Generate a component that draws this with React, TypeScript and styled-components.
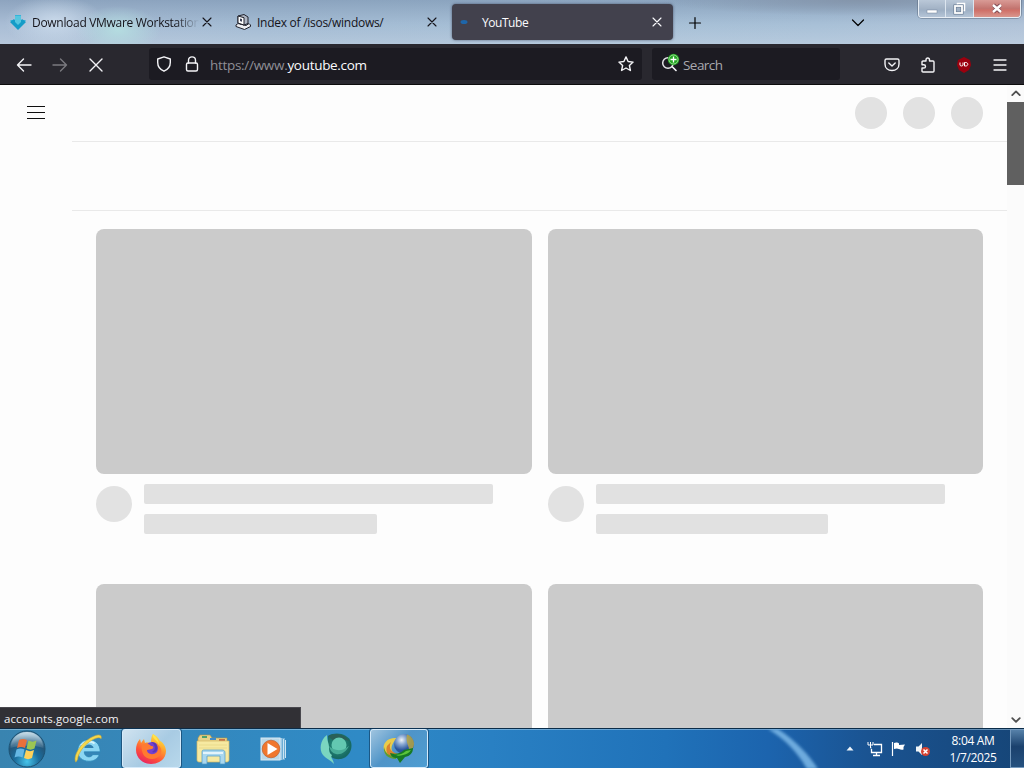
import type { ReactNode } from "react";
import styled, { createGlobalStyle } from "styled-components";

const GlobalStyle = createGlobalStyle`
  * {
    box-sizing: border-box;
  }
  body {
    margin: 0;
    overflow: hidden;
    font-family: "Open Sans", "Noto Sans", sans-serif;
    font-size: 12px;
  }
  svg {
    display: block;
    flex-shrink: 0;
  }
`;

const Wrapper = styled.div`
  display: flex;
  flex-direction: column;
  width: 1024px;
  height: 768px;
  overflow: hidden;
  background-color: #fdfdfd;
`;

const TabBar = styled.div`
  position: relative;
  display: flex;
  height: 44px;
  padding: 4px 0 4px 2px;
  gap: 4px;
  background:
    radial-gradient(ellipse 42px 24px at 118px 30px, #b4dce0 0%, transparent 100%),
    radial-gradient(ellipse 50px 26px at 55px 22px, #c9d9ea 0%, transparent 100%),
    radial-gradient(ellipse 200px 16px at 860px 0px, #8495ab 0%, transparent 100%),
    linear-gradient(to bottom, rgba(114, 139, 169, 0.5), transparent 55%, rgba(208, 220, 233, 0.35)),
    linear-gradient(to right, #a9bdd5, #a3bbd3 25%, #a6bfd6 60%, #a8c0d7 80%, #b1c3d8);
`;

const Tab = styled.div<{ $active?: boolean }>`
  display: flex;
  align-items: center;
  flex-shrink: 0;
  width: 221px;
  height: 36px;
  padding: 0 8px;
  border-radius: 4px;
  color: ${(props) => (props.$active ? "#fbfbfe" : "#15141a")};
  background-color: ${(props) => (props.$active ? "#42414d" : "transparent")};
  box-shadow: ${(props) => (props.$active ? "0 0 3px rgba(30, 35, 60, 0.6)" : "none")};
`;

const TabLabel = styled.span<{ $fade?: boolean; $spacing: number }>`
  flex: 1;
  min-width: 0;
  margin-left: 6px;
  padding-top: 2px;
  white-space: nowrap;
  font-size: 12px;
  line-height: 18px;
  letter-spacing: ${(props) => props.$spacing}px;
  mask-image: ${(props) =>
    props.$fade ? "linear-gradient(to left, transparent, #000 24px)" : "none"};
`;

const TabButton = styled.div`
  display: grid;
  place-items: center;
  width: 35px;
  height: 37px;
`;

const TabListButton = styled(TabButton)`
  margin-left: 124px;
`;

const WindowControls = styled.div`
  position: absolute;
  top: 0;
  right: 3px;
  display: flex;
  height: 18px;
  border: 1px solid #e8eef5;
  border-top: none;
  border-radius: 0 0 4px 4px;
  box-shadow: 0 0 0 1px rgba(85, 100, 120, 0.45);
  overflow: hidden;
`;

const WindowButton = styled.div<{ $width: number; $close?: boolean }>`
  display: grid;
  place-items: center;
  width: ${(props) => props.$width}px;
  border-left: ${(props) => (props.$width === 26 ? "none" : "1px solid #dce5ef")};
  background: ${(props) =>
    props.$close
      ? "linear-gradient(to bottom, #d99b96, #c3746f 50%, #cf7068 60%, #d9968d)"
      : "linear-gradient(to bottom, #bac8d8, #a3b3c6 50%, #9eb0c5 60%, #b5c5d7)"};
`;

const NavBar = styled.div`
  display: flex;
  align-items: center;
  height: 41px;
  padding-left: 6px;
  background-color: #29282f;
  border-bottom: 1px solid #0c0c0d;
  color: #f3f3f6;
`;

const NavButton = styled.div<{ $dim?: boolean }>`
  display: grid;
  place-items: center;
  width: 36px;
  height: 37px;
  padding-top: 1px;
  opacity: ${(props) => (props.$dim ? 0.4 : 1)};
`;

const UrlBar = styled.div`
  display: flex;
  align-items: center;
  width: 493px;
  height: 32px;
  margin-left: 35px;
  padding: 0 8px 0 7px;
  border-radius: 3px;
  background-color: #1c1b22;
`;

const UrlText = styled.div`
  flex: 1;
  margin-left: 10px;
  color: #fbfbfe;
  font-size: 13.5px;
  line-height: 20px;
  letter-spacing: -0.3px;
  padding-top: 2px;

  span {
    color: #8f8f96;
  }
`;

const SearchBar = styled.div`
  display: flex;
  align-items: center;
  width: 188px;
  height: 32px;
  margin-left: 10px;
  padding-left: 9px;
  border-radius: 3px;
  background-color: #1c1b22;
  color: #a9a9af;
  font-size: 13.5px;
  letter-spacing: -0.55px;

  span {
    margin-left: 3px;
    padding-top: 1px;
  }
`;

const Toolbar = styled.div`
  display: flex;
  margin-left: 34px;
`;

const Spaced = styled.div<{ $left: number }>`
  margin-left: ${(props) => props.$left}px;
`;

const Viewport = styled.div`
  position: relative;
  display: flex;
  height: 643px;
  overflow: hidden;
`;

const Page = styled.main`
  flex: 1;
  overflow: hidden;
`;

const Masthead = styled.header`
  display: flex;
  justify-content: space-between;
  align-items: center;
  height: 56px;
  padding: 0 24px 0 26px;
`;

const Circles = styled.div`
  display: flex;
  gap: 16px;
`;

const Circle = styled.div<{ $size: number }>`
  flex-shrink: 0;
  width: ${(props) => props.$size}px;
  height: ${(props) => props.$size}px;
  border-radius: 50%;
  background-color: #e2e2e2;
`;

const ChipBar = styled.div`
  height: 70px;
  margin-left: 72px;
  border-top: 1px solid #e9e9e9;
  border-bottom: 1px solid #e9e9e9;
`;

const Grid = styled.div`
  display: grid;
  grid-template-columns: 436px 435px;
  column-gap: 16px;
  row-gap: 50px;
  padding: 18px 0 0 96px;
`;

const Thumbnail = styled.div`
  height: 245px;
  border-radius: 8px;
  background-color: #cbcbcb;
`;

const Details = styled.div`
  display: flex;
  gap: 12px;
  height: 60px;
  padding-top: 10px;

  ${Circle} {
    margin-top: 2px;
  }
`;

const Lines = styled.div`
  display: flex;
  flex-direction: column;
  gap: 10px;
`;

const Line = styled.div<{ $width: number }>`
  width: ${(props) => props.$width}px;
  height: 20px;
  border-radius: 2px;
  background-color: #e1e1e1;
`;

const ScrollBar = styled.div`
  display: flex;
  flex-direction: column;
  align-items: center;
  width: 17px;
  background-color: #fbfbfb;
  color: #505050;
`;

const ScrollArrow = styled.div`
  display: grid;
  place-items: center;
  width: 16px;
  height: 17px;
`;

const ScrollTrack = styled.div`
  flex: 1;
  width: 17px;
`;

const ScrollThumb = styled.div`
  height: 83px;
  background-color: #606060;
`;

const StatusPanel = styled.div`
  position: absolute;
  left: 0;
  bottom: 0;
  width: 301px;
  height: 21px;
  padding-left: 4px;
  border-top: 1px solid #49484e;
  border-right: 1px solid #49484e;
  background-color: #313035;
  color: #f3f3f5;
  font-size: 11.5px;
  line-height: 22px;
  letter-spacing: 0.1px;
`;

const TaskBar = styled.footer`
  position: relative;
  display: flex;
  height: 40px;
  border-top: 1px solid #0b2c48;
  box-shadow: inset 0 1px 0 rgba(180, 215, 240, 0.5);
  background: linear-gradient(
    to right,
    #3984b0,
    #3488bd 18%,
    #2f8ac6 35%,
    #2980c3 48%,
    #2072b9 65%,
    #1c64ae 75%,
    #1a5391 85%,
    #164577
  );
`;

const Streak = styled.svg`
  position: absolute;
  left: 760px;
  top: 0;
`;

const StartButton = styled.div`
  display: grid;
  place-items: center;
  width: 54px;
`;

const TaskButton = styled.div<{ $width: number; $open?: boolean; $bright?: boolean }>`
  display: grid;
  place-items: center;
  width: ${(props) => props.$width}px;
  height: 39px;
  border: 1px solid ${(props) => (props.$open ? "#d5eafa" : "transparent")};
  border-radius: 3px;
  background: ${(props) => {
    if (props.$bright) return "linear-gradient(135deg, #d0e3f0, #a8cbe3 55%, #b8d8eb)";
    if (props.$open) return "linear-gradient(135deg, #9fc4df, #4f94c8 45%, #4d9dd2)";
    return "none";
  }};
  box-shadow: ${(props) => (props.$open ? "0 0 0 1px rgba(15, 55, 90, 0.6)" : "none")};
`;

const Tray = styled.div`
  display: flex;
  align-items: center;
  margin-left: auto;
`;

const Clock = styled.div`
  width: 62px;
  margin-left: 10px;
  color: #fff;
  font-size: 12px;
  line-height: 17px;
  letter-spacing: -0.35px;
  text-align: center;
`;

const ShowDesktop = styled.div`
  width: 14px;
  height: 39px;
  margin-left: 6px;
  border: 1px solid #7499bd;
  border-right: none;
  background: linear-gradient(to bottom, #5681a9, #1b416d 45%, #25517f);
`;

type IconProps = {
  size?: number;
  width?: number;
  children: ReactNode;
};

function Icon({ size = 16, width = 1.4, children }: IconProps) {
  return (
    <svg
      width={size}
      height={size}
      viewBox="0 0 16 16"
      fill="none"
      stroke="currentColor"
      strokeWidth={width}
      strokeLinecap="round"
      strokeLinejoin="round"
    >
      {children}
    </svg>
  );
}

function CloseIcon() {
  return (
    <Icon width={1.1}>
      <path d="M4 4l8 8M12 4l-8 8" />
    </Icon>
  );
}

function VmwareIcon() {
  return (
    <svg width="16" height="16" viewBox="0 0 16 16">
      <path d="M5 1h6v5h5l-8 9-8-9h5z" fill="#35b4d9" />
      <path d="M0 8l4-3 4 5 4-5 4 3-8 8z" fill="#159cc7" />
      <path d="M5 2h6v6l-3 3-3-3z" fill="#55c6df" />
    </svg>
  );
}

function ArchiveIcon() {
  return (
    <svg width="16" height="16" viewBox="0 0 16 16" stroke="#20222c" strokeWidth="1">
      <path d="M1 11l2-1.500 8 2 3-2 1.500 1.500v1.500L9.500 15.500 1 12.500z" fill="#eceef2" />
      <path d="M3 2l6-1.500L13 3v6.500l-4 1.500-6-2z" fill="#aeb6c4" />
      <path d="M3 2l6 1.700V11L3 9z" fill="#fff" />
      <path d="M5 4.500l2 .6v2.600l-2-.6z" fill="#3a4056" stroke="none" />
    </svg>
  );
}

function SearchEngineIcon() {
  return (
    <svg width="19" height="22" viewBox="0 0 19 22" fill="none">
      <path d="M11 13.500l4 4" stroke="#fbfbfe" strokeWidth="1.600" strokeLinecap="round" />
      <circle cx="7" cy="10" r="5.300" stroke="#e5e5e9" strokeWidth="1.500" />
      <circle cx="12.500" cy="6.500" r="5.700" fill="#23a522" />
      <circle cx="12.500" cy="6.500" r="4.500" stroke="#bdf0b5" strokeWidth="0.700" />
      <path d="M12.500 3.500v6M9.500 6.500h6" stroke="#fff" strokeWidth="1.300" />
    </svg>
  );
}

function StartOrb() {
  return (
    <svg width="38" height="38" viewBox="0 0 38 38">
      <defs>
        <radialGradient id="orb" cx="50%" cy="85%" r="75%">
          <stop offset="0" stopColor="#46c4ea" />
          <stop offset="0.45" stopColor="#1b6d9d" />
          <stop offset="0.8" stopColor="#245578" />
          <stop offset="1" stopColor="#5688a8" />
        </radialGradient>
        <linearGradient id="shine" x1="0" y1="0" x2="0" y2="1">
          <stop offset="0" stopColor="#dfedf4" stopOpacity="0.85" />
          <stop offset="1" stopColor="#a6c6d8" stopOpacity="0.15" />
        </linearGradient>
      </defs>
      <circle cx="19" cy="19" r="18" fill="url(#orb)" stroke="#1c5273" />
      <path d="M2.500 18C3 8 10 2 19 2s16 6 16.500 16c-9-3-24-3-33 0z" fill="url(#shine)" />
      <path d="M11 10c3-1.500 5-1.500 8 0l-2 8c-3-1.500-5-1.500-8 0z" fill="#e9703a" />
      <path d="M20.500 10.500c3 1.500 5 1.500 8 0l-2 8c-3 1.500-5 1.500-8 0z" fill="#9bc653" />
      <path d="M8.500 19.500c3-1.500 5-1.500 8 0l-2 8c-3-1.500-5-1.500-8 0z" fill="#65b7e4" />
      <path d="M18 20c3 1.500 5 1.500 8 0l-2 8c-3 1.500-5 1.500-8 0z" fill="#ffd15a" />
    </svg>
  );
}

function ExplorerIcon() {
  return (
    <svg width="30" height="34" viewBox="0 0 32 34" fill="none">
      <path
        d="M28 23c-2 5-6 7-11 7C10 30 5 26 5 19S10 7 17 7s12 5 12 13H12c0 6 7 7 9 3z"
        fill="#8bd6f3"
        stroke="#2a86b5"
        strokeWidth="0.800"
      />
      <path d="M12 16c1-5 9-5 10 0z" fill="#3180b0" />
      <path d="M9 13c3-4 10-5 14-2" stroke="#d5f3fc" strokeWidth="2" />
      <path
        d="M3 31C-1 24 10 8 23 3c5-2 8-1 7 3-2-2-5-1-9 1C12 12 5 22 5 28z"
        fill="#f5d84b"
        stroke="#c9a636"
        strokeWidth="0.600"
      />
    </svg>
  );
}

function FirefoxIcon() {
  return (
    <svg width="34" height="32" viewBox="0 0 34 32">
      <defs>
        <linearGradient id="fox" x1="0.800" y1="0" x2="0.250" y2="1">
          <stop offset="0" stopColor="#fff148" />
          <stop offset="0.35" stopColor="#ffa52d" />
          <stop offset="0.7" stopColor="#ff5038" />
          <stop offset="1" stopColor="#e52167" />
        </linearGradient>
      </defs>
      <path
        d="M18 1c5 3 6 5 7 7 3 1 6 6 6 10 0 8-7 13-15 13S1 25 1 17c0-4 1-8 4-11l1 4 3-4 1 4c3-1 5 0 6 1 0-4 0-7 2-10z"
        fill="url(#fox)"
      />
      <circle cx="17" cy="16" r="7" fill="#7541cf" />
      <path d="M7 12c4-3 7-1 9 1 3 0 3 2 1 3l-5 1c0 4 6 6 10 2 2-3 0-7-2-8 6 1 8 7 5 11-4 6-14 5-17-1-1-3-2-6-1-9z" fill="#ff7a30" />
      <path d="M16 9c5 0 8 4 6 8-1 2-3 3-5 2 4-2 4-7-1-10z" fill="#5936b7" />
      <path d="M18 1c-2 4 5 6 6 11 0-5-3-8-6-11z" fill="#ffe34b" />
    </svg>
  );
}

function FolderIcon() {
  return (
    <svg width="34" height="32" viewBox="0 0 34 32">
      <path d="M2 5l2-3h10l2 3h15v22H2z" fill="#e6d289" stroke="#b79443" strokeWidth="0.600" />
      <path d="M6 3h5v2H6z" fill="#4da26d" />
      <path d="M14 5h6v2h-6z" fill="#3f8ccb" />
      <path d="M23 6h6v2h-6z" fill="#c57049" />
      <path d="M1 8h32v19c0 1-1 2-2 2H3c-1 0-2-1-2-2z" fill="#f6e9a1" stroke="#d2b862" strokeWidth="0.700" />
      <path d="M3 12h28M3 15h28" stroke="#eadb8b" />
      <path d="M6 31V19c0-2 1-2 2-2h18c2 0 3 1 3 3v11h-5v-8H11v8z" fill="#a9d7ee" stroke="#4a9ac5" strokeWidth="0.700" />
      <path d="M7 20h20" stroke="#e4f4fb" strokeWidth="2" />
    </svg>
  );
}

function MediaPlayerIcon() {
  return (
    <svg width="26" height="26" viewBox="0 0 26 26">
      <rect x="5" y="2" width="20" height="22" fill="#6cadd5" />
      <path d="M21 2v22M23.500 3v20M25.500 4v18" stroke="#cce4f3" />
      <rect x="1" y="2" width="19" height="22" fill="#b9d8e9" stroke="#d9eaf3" />
      <circle cx="11" cy="13" r="8.800" fill="#f0772e" stroke="#bd602f" strokeWidth="0.700" />
      <path d="M7.500 7l10 6-10 6z" fill="#fff" />
    </svg>
  );
}

function SharkIcon() {
  return (
    <svg width="34" height="34" viewBox="0 0 34 34">
      <defs>
        <radialGradient id="ball" cx="45%" cy="45%">
          <stop offset="0" stopColor="#2f9784" />
          <stop offset="1" stopColor="#176a62" />
        </radialGradient>
      </defs>
      <path d="M9 4C17-1 29 2 32 10c2 7-2 15-10 17-8 1-14-3-14-10z" fill="url(#ball)" />
      <path d="M9 4c7-4 17-2 21 5-5-2-10-2-13 2z" fill="#2a6058" />
      <path d="M8 3C1 8 0 18 4 23c3 4 8 5 11 9-1-6-4-6-2-9-2-1-3-3-3-8 0-4-2-6-2-12z" fill="#7ad6c0" />
      <circle cx="20" cy="13" r="7.500" fill="#63c8b1" />
      <path d="M10 14c5 5 13 6 20 0-3 6-8 9-13 8-4-1-6-4-7-8z" fill="#48ac97" />
    </svg>
  );
}

function DownloadManagerIcon() {
  return (
    <svg width="34" height="32" viewBox="0 0 34 32">
      <defs>
        <radialGradient id="globe" cx="38%" cy="30%">
          <stop offset="0" stopColor="#f1f4f8" />
          <stop offset="0.45" stopColor="#8aa9d3" />
          <stop offset="1" stopColor="#2a559b" />
        </radialGradient>
      </defs>
      <path d="M15 5C6 4 0 10 2 17c1 5 6 8 13 8l2-4c-9 0-10-8-2-16z" fill="#e9cc4a" />
      <path d="M9 9c-3 6 0 11 8 12l-2 4C6 25 3 19 5 13z" fill="#d9822e" />
      <path d="M2 14c1 6 5 9 12 10v2C6 26 1 21 2 14z" fill="#5d9c33" />
      <circle cx="22" cy="11" r="10" fill="url(#globe)" />
      <path d="M25 1.500c4 1 7 5 7 9.500 0 3-2 6-5 8 1-6-4-9-2-17.500z" fill="#b5a444" opacity="0.850" />
      <path d="M8 20c6 2 11 0 14-3l9-2c0 5-3 8-8 9l-5 6-3-5c-3 0-6-1-7-5z" fill="#177a24" />
      <path d="M12 21.500c5 1 9-1 12-3.500l5-1c-2 3-4 4-8 5-3 1-7 1-9-.5z" fill="#5bc53a" />
    </svg>
  );
}

const navIcons = {
  back: <path d="M15 8H1.500M7.500 2L1.500 8l6 6" />,
  forward: <path d="M1 8h13.500M8.500 2l6 6-6 6" />,
  stop: <path d="M2 2l12 12M14 2L2 14" />,
  shield: <path d="M8 .8l6.300 2.200v3.500c0 4.500-3 7.300-6.300 8.700C4.700 13.800 1.700 11 1.700 6.500V3z" />,
  lock: (
    <>
      <rect x="2.500" y="7" width="11" height="8" rx="1.500" />
      <path d="M4.500 7V4.300C4.500 2.300 6 .9 8 .9s3.500 1.400 3.500 3.400V7" />
    </>
  ),
  star: <path d="M8 .9l2.100 4.600 5 .6-3.700 3.400 1 5L8 12l-4.400 2.500 1-5L.9 6.100l5-.6z" />,
  pocket: (
    <>
      <path d="M2.500 2h11c.8 0 1.500.6 1.500 1.500V7c0 4-3 6.500-7 6.500S1 11 1 7V3.500C1 2.600 1.700 2 2.500 2z" />
      <path d="M4.800 6L8 9l3.200-3" />
    </>
  ),
  puzzle: (
    <path d="M6 4V2.800C6 1.700 6.700 1 7.700 1s1.800.7 1.800 1.800V4H13c.6 0 1 .4 1 1v9c0 .6-.4 1-1 1H3c-.6 0-1-.4-1-1v-3h1.700C4.900 11 5.500 10.300 5.500 9.400S4.900 7.700 3.700 7.700H2V5c0-.6.4-1 1-1z" />
  ),
  menu: <path d="M2 3h12M2 8h12M2 13h12" />,
};

function App() {
  return (
    <Wrapper>
      <GlobalStyle />
      <TabBar>
        <Tab>
          <VmwareIcon />
          <TabLabel $fade $spacing={-0.3}>Download VMware Workstation</TabLabel>
          <CloseIcon />
        </Tab>
        <Tab>
          <ArchiveIcon />
          <TabLabel $spacing={-0.27}>Index of /isos/windows/</TabLabel>
          <CloseIcon />
        </Tab>
        <Tab $active>
          <svg width="16" height="16" viewBox="0 0 16 16">
            <ellipse cx="4" cy="8" rx="3.500" ry="2" fill="#1e66aa" />
          </svg>
          <TabLabel $spacing={-0.45}>YouTube</TabLabel>
          <CloseIcon />
        </Tab>
        <TabButton>
          <Icon width={1.2}>
            <path d="M8 2.500v11M2.500 8h11" />
          </Icon>
        </TabButton>
        <TabListButton>
          <Icon width={1.2}>
            <path d="M2.500 5L8 10.500 13.500 5" />
          </Icon>
        </TabListButton>
        <WindowControls>
          <WindowButton $width={26}>
            <svg width="12" height="12" viewBox="0 0 12 12">
              <rect x="1" y="7" width="10" height="3" fill="#fff" stroke="#73859a" strokeWidth="0.500" />
            </svg>
          </WindowButton>
          <WindowButton $width={28}>
            <svg width="13" height="13" viewBox="0 0 13 13" fill="none">
              <path d="M4.500 3V1.500h7v7H10" stroke="#fff" strokeWidth="1.500" />
              <rect x="2" y="4" width="7" height="7" stroke="#65778d" strokeWidth="3" />
              <rect x="2" y="4" width="7" height="7" stroke="#fff" strokeWidth="1.800" />
            </svg>
          </WindowButton>
          <WindowButton $width={47} $close>
            <svg width="12" height="12" viewBox="0 0 12 12">
              <path d="M2.500 2l7 7M9.500 2l-7 7" stroke="#7d4b54" strokeWidth="4" />
              <path d="M2 2l8 7M10 2L2 9" stroke="#fff" strokeWidth="2.400" />
            </svg>
          </WindowButton>
        </WindowControls>
      </TabBar>

      <NavBar>
        <NavButton>
          <Icon>{navIcons.back}</Icon>
        </NavButton>
        <NavButton $dim>
          <Icon>{navIcons.forward}</Icon>
        </NavButton>
        <NavButton>
          <Icon>{navIcons.stop}</Icon>
        </NavButton>
        <UrlBar>
          <Icon>{navIcons.shield}</Icon>
          <Spaced $left={12}>
            <Icon>{navIcons.lock}</Icon>
          </Spaced>
          <UrlText>
            <span>https://www.</span>youtube.com
          </UrlText>
          <Icon>{navIcons.star}</Icon>
        </UrlBar>
        <SearchBar>
          <SearchEngineIcon />
          <span>Search</span>
        </SearchBar>
        <Toolbar>
          <NavButton>
            <Icon>{navIcons.pocket}</Icon>
          </NavButton>
          <NavButton>
            <Icon>{navIcons.puzzle}</Icon>
          </NavButton>
          <NavButton>
            <svg width="16" height="16" viewBox="0 0 16 16" fill="none">
              <path d="M8 0l6 3 1 5-2 5-5 3-5-3-2-5 1-5z" fill="#9b000e" />
              <path d="M4 5.500V8c0 1.300 3 1.300 3 0V5.500M8.500 5.500h1.200c2.800 0 2.800 3.500 0 3.500H8.500z" stroke="#fff" strokeWidth="1" />
            </svg>
          </NavButton>
          <NavButton>
            <Icon width={1.3}>{navIcons.menu}</Icon>
          </NavButton>
        </Toolbar>
      </NavBar>

      <Viewport>
        <Page>
          <Masthead>
            <svg width="20" height="14" viewBox="0 0 20 14" stroke="#0f0f0f">
              <path d="M1 .5h18M1 6.500h18M1 12.500h18" />
            </svg>
            <Circles>
              <Circle $size={32} />
              <Circle $size={32} />
              <Circle $size={32} />
            </Circles>
          </Masthead>
          <ChipBar />
          <Grid>
            {[0, 1, 2, 3].map((card) => (
              <div key={card}>
                <Thumbnail />
                <Details>
                  <Circle $size={36} />
                  <Lines>
                    <Line $width={349} />
                    <Line $width={card % 2 ? 232 : 233} />
                  </Lines>
                </Details>
              </div>
            ))}
          </Grid>
        </Page>
        <ScrollBar>
          <ScrollArrow>
            <Icon size={12} width={2.4}>
              <path d="M3 9.500l5-5 5 5" />
            </Icon>
          </ScrollArrow>
          <ScrollTrack>
            <ScrollThumb />
          </ScrollTrack>
          <ScrollArrow>
            <Icon size={12} width={2.4}>
              <path d="M3 5.500l5 5 5-5" />
            </Icon>
          </ScrollArrow>
        </ScrollBar>
        <StatusPanel>accounts.google.com</StatusPanel>
      </Viewport>

      <TaskBar>
        <Streak width="80" height="39" viewBox="0 0 80 39">
          <defs>
            <filter id="soft">
              <feGaussianBlur stdDeviation="1.500" />
            </filter>
          </defs>
          <path d="M8 0h10c18 12 31 26 40 40H47C38 24 25 10 8 0z" fill="#7db9e8" opacity="0.850" filter="url(#soft)" />
        </Streak>
        <StartButton>
          <StartOrb />
        </StartButton>
        <TaskButton $width={68}>
          <ExplorerIcon />
        </TaskButton>
        <TaskButton $width={59} $open $bright>
          <FirefoxIcon />
        </TaskButton>
        <TaskButton $width={64}>
          <FolderIcon />
        </TaskButton>
        <TaskButton $width={56}>
          <MediaPlayerIcon />
        </TaskButton>
        <TaskButton $width={69}>
          <SharkIcon />
        </TaskButton>
        <TaskButton $width={58} $open>
          <DownloadManagerIcon />
        </TaskButton>
        <Tray>
          <svg width="8" height="5" viewBox="0 0 8 5">
            <path d="M4 .5l3.500 4h-7z" fill="#eef5fb" />
          </svg>
          <Spaced $left={13}>
            <svg width="16" height="16" viewBox="0 0 16 16" fill="none" stroke="#fff">
              <path d="M7 3.500h7.500v8h-10V8M9.500 12v2M6 14.500h7" strokeWidth="1.300" />
              <path d="M1 1v3h5V1M3.500 1v6h1" />
            </svg>
          </Spaced>
          <Spaced $left={8}>
            <svg width="16" height="16" viewBox="0 0 16 16">
              <path d="M1.500 1v14" stroke="#fff" strokeWidth="1.200" />
              <path d="M3 2c2-1 4-.5 5 .5V4c2 0 4-.5 6-.5L12.500 6v2.500c-2 .5-3 0-4.500-.5-2-1-3-.5-5 0z" fill="#fff" />
            </svg>
          </Spaced>
          <Spaced $left={8}>
            <svg width="17" height="16" viewBox="0 0 17 16">
              <path d="M1 5.500h2.500L7 2v12l-3.500-3.500H1z" fill="#f1f5f8" />
              <circle cx="10.500" cy="10.500" r="4.500" fill="#d64332" />
              <path d="M8.500 8.500l4 4M12.500 8.500l-4 4" stroke="#fff" strokeWidth="1.500" />
            </svg>
          </Spaced>
          <Clock>
            8:04 AM
            <br />
            1/7/2025
          </Clock>
          <ShowDesktop />
        </Tray>
      </TaskBar>
    </Wrapper>
  );
}

export default App;
